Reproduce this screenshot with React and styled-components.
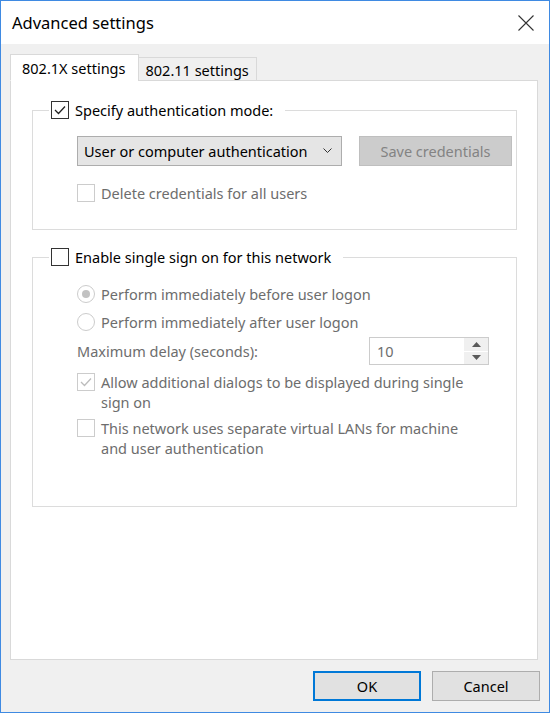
import React from "react";
import styled, { createGlobalStyle } from "styled-components";

const GlobalStyle = createGlobalStyle`
  html, body {
    margin: 0;
    padding: 0;
    background: #ffffff;
  }
  body {
    font-family: "Noto Sans", "Open Sans", sans-serif;
    font-size: 14.5px;
    color: #000;
  }
`;

const Window = styled.div`
  width: 550px;
  height: 713px;
  box-sizing: border-box;
  border: 1px solid #3f8ae2;
  display: flex;
  flex-direction: column;
  background: #f0f0f0;
`;

const TitleBar = styled.div`
  height: 43px;
  flex: 0 0 43px;
  background: #fff;
  display: flex;
  align-items: center;
  justify-content: space-between;
  padding: 0 15px 0 11px;
  font-size: 16.5px;
`;

const CloseIcon = styled.svg`
  width: 16px;
  height: 16px;
  display: block;
`;

const Body = styled.div`
  flex: 1;
  display: flex;
  flex-direction: column;
  padding: 10px 11px 11px 9px;
  min-height: 0;
`;

const TabRow = styled.div`
  display: flex;
  align-items: flex-end;
  margin-bottom: -1px;
  position: relative;
  z-index: 1;
`;

const Tab = styled.div`
  box-sizing: border-box;
  height: ${(p) => (p.$active ? "27px" : "24px")};
  line-height: ${(p) => (p.$active ? "26px" : "25px")};
  padding: ${(p) => (p.$active ? "0 12px 0 11px" : "0 7px 0 7px")};
  margin-left: ${(p) => (p.$active ? "0" : "-1px")};
  border: 1px solid #d9d9d9;
  border-bottom: ${(p) => (p.$active ? "1px solid #fff" : "1px solid #d9d9d9")};
  background: ${(p) => (p.$active ? "#fff" : "#f0f0f0")};
  white-space: nowrap;
`;

const Panel = styled.div`
  flex: 1;
  background: #fff;
  border: 1px solid #d9d9d9;
  padding: 19px 20px 0 21px;
  display: flex;
  flex-direction: column;
`;

const Group = styled.fieldset`
  margin: ${(p) => (p.$spaced ? "17px 0 0" : "0")};
  border: 1px solid #dcdcdc;
  padding: 0 3px 0 16px;
  min-width: 0;
`;

const Legend = styled.legend`
  padding: 0 12px 0 2px;
  display: flex;
  align-items: center;
  gap: 6px;
  height: 20px;
  line-height: 20px;
`;

const GroupBody = styled.div`
  padding: ${(p) => p.$pad};
  display: flex;
  flex-direction: column;
`;

const Box = styled.span`
  box-sizing: border-box;
  width: 18px;
  height: 18px;
  flex: 0 0 18px;
  margin-top: ${(p) => (p.$top ? "1px" : "0")};
  border: 1px solid ${(p) => (p.$disabled ? "#cccccc" : "#333333")};
  background: #fff;
  display: flex;
  align-items: center;
  justify-content: center;
`;

const Check = ({ color }) => (
  <svg width="12" height="10" viewBox="0 0 12 10">
    <path d="M1 5 L4.5 8.5 L11 1.5" fill="none" stroke={color} strokeWidth="1.3" />
  </svg>
);

const Checkbox = ({ checked, disabled, top }) => (
  <Box $disabled={disabled} $top={top}>
    {checked && <Check color={disabled ? "#bcbcbc" : "#222"} />}
  </Box>
);

const Round = styled.span`
  box-sizing: border-box;
  width: 18px;
  height: 18px;
  flex: 0 0 18px;
  border-radius: 50%;
  border: 1px solid #cccccc;
  background: #fff;
  display: flex;
  align-items: center;
  justify-content: center;
  &::after {
    content: "";
    width: 8px;
    height: 8px;
    border-radius: 50%;
    background: ${(p) => (p.$checked ? "#c2c2c2" : "transparent")};
  }
`;

const OptionRow = styled.div`
  display: flex;
  align-items: ${(p) => (p.$top ? "flex-start" : "center")};
  gap: 6px;
  margin-top: ${(p) => p.$mt || "0"};
  color: ${(p) => (p.$disabled ? "#6d6d6d" : "#000")};
  line-height: 20px;
`;

const ControlRow = styled.div`
  display: flex;
  align-items: center;
  gap: 17px;
`;

const Select = styled.div`
  box-sizing: border-box;
  width: 265px;
  flex: 0 0 265px;
  height: 30px;
  border: 1px solid #adadad;
  background: #e5e5e5;
  display: flex;
  align-items: center;
  justify-content: space-between;
  padding: 0 9px 0 6px;
`;

const Button = styled.div`
  box-sizing: border-box;
  width: ${(p) => p.$w || "108px"};
  flex: 0 0 ${(p) => p.$w || "108px"};
  height: 30px;
  display: flex;
  align-items: center;
  justify-content: center;
  background: ${(p) => (p.$disabled ? "#cccccc" : "#e1e1e1")};
  border: ${(p) =>
    p.$default ? "2px solid #0078d7" : p.$disabled ? "1px solid #bfbfbf" : "1px solid #adadad"};
  color: ${(p) => (p.$disabled ? "#838383" : "#000")};
`;

const DelayRow = styled.div`
  display: flex;
  align-items: center;
  justify-content: space-between;
  margin: 5px 24px 0 0;
  color: #6d6d6d;
`;

const Spinner = styled.div`
  box-sizing: border-box;
  width: 120px;
  height: 28px;
  border: 1px solid #cccccc;
  display: flex;
`;

const SpinValue = styled.div`
  flex: 1;
  padding-left: 7px;
  line-height: 26px;
  color: #6d6d6d;
`;

const SpinButtons = styled.div`
  width: 24px;
  display: flex;
  flex-direction: column;
  gap: 1px;
  background: #fff;
`;

const SpinButton = styled.div`
  flex: 1;
  background: #f0f0f0;
  display: flex;
  align-items: center;
  justify-content: center;
`;

const Footer = styled.div`
  display: flex;
  justify-content: flex-end;
  gap: 11px;
  margin: 11px -2px 0 0;
`;

const Arrow = ({ up }) => (
  <svg width="9" height="5" viewBox="0 0 9 5">
    <path d={up ? "M0 5 L4.5 0 L9 5 Z" : "M0 0 L4.5 5 L9 0 Z"} fill="#5a5a5a" />
  </svg>
);

export default function App() {
  return (
    <>
      <GlobalStyle />
      <Window>
        <TitleBar>
          <span>Advanced settings</span>
          <CloseIcon viewBox="0 0 16 16">
            <path d="M0.5 0.5 L15.5 15.5 M15.5 0.5 L0.5 15.5" stroke="#333" strokeWidth="1.1" />
          </CloseIcon>
        </TitleBar>
        <Body>
          <TabRow>
            <Tab $active>802.1X settings</Tab>
            <Tab>802.11 settings</Tab>
          </TabRow>
          <Panel>
            <Group>
              <Legend>
                <Checkbox checked />
                <span>Specify authentication mode:</span>
              </Legend>
              <GroupBody $pad="16px 0 26px 28px">
                <ControlRow>
                  <Select>
                    <span>User or computer authentication</span>
                    <svg width="9" height="6" viewBox="0 0 9 6">
                      <path d="M0.5 0.5 L4.5 4.5 L8.5 0.5" fill="none" stroke="#333" strokeWidth="1" />
                    </svg>
                  </Select>
                  <Button $w="153px" $disabled>Save credentials</Button>
                </ControlRow>
                <OptionRow $disabled $mt="17px">
                  <Checkbox disabled />
                  <span>Delete credentials for all users</span>
                </OptionRow>
              </GroupBody>
            </Group>

            <Group $spaced>
              <Legend>
                <Checkbox />
                <span>Enable single sign on for this network</span>
              </Legend>
              <GroupBody $pad="17px 0 48px 28px">
                <OptionRow $disabled>
                  <Round $checked />
                  <span>Perform immediately before user logon</span>
                </OptionRow>
                <OptionRow $disabled $mt="8px">
                  <Round />
                  <span>Perform immediately after user logon</span>
                </OptionRow>
                <DelayRow>
                  <span>Maximum delay (seconds):</span>
                  <Spinner>
                    <SpinValue>10</SpinValue>
                    <SpinButtons>
                      <SpinButton>
                        <Arrow up />
                      </SpinButton>
                      <SpinButton>
                        <Arrow />
                      </SpinButton>
                    </SpinButtons>
                  </Spinner>
                </DelayRow>
                <OptionRow $disabled $top $mt="7px">
                  <Checkbox checked disabled top />
                  <span>
                    Allow additional dialogs to be displayed during single
                    <br />
                    sign on
                  </span>
                </OptionRow>
                <OptionRow $disabled $top $mt="6px">
                  <Checkbox disabled top />
                  <span>
                    This network uses separate virtual LANs for machine
                    <br />
                    and user authentication
                  </span>
                </OptionRow>
              </GroupBody>
            </Group>
          </Panel>
          <Footer>
            <Button $default>OK</Button>
            <Button>Cancel</Button>
          </Footer>
        </Body>
      </Window>
    </>
  );
}
